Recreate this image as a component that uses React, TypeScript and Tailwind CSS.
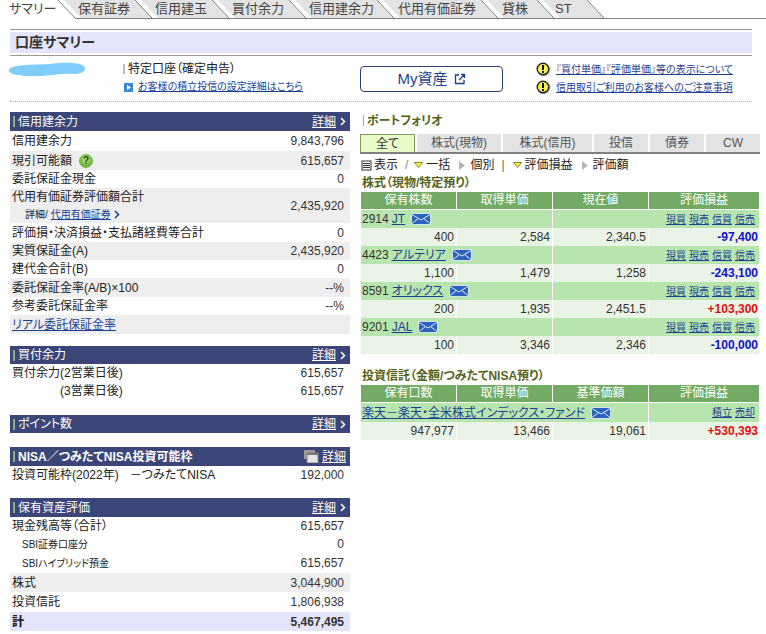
const font = "[font-family:'Liberation_Sans','Noto_Sans_CJK_JP',sans-serif] [font-feature-settings:'palt']"

const tabs = [
  { label: 'サマリー', w: 64, px: 9 },
  { label: '保有証券', w: 77, px: 14 },
  { label: '信用建玉', w: 77, px: 14 },
  { label: '買付余力', w: 77, px: 14 },
  { label: '信用建余力', w: 88, px: 14 },
  { label: '代用有価証券', w: 104, px: 15 },
  { label: '貸株', w: 56, px: 15 },
  { label: 'ST', w: 50, px: 12 },
]

function Tabs() {
  return (
    <div className="flex h-[19px] border-b border-[#808080]">
      {tabs.map((t, i) => (
        <div
          key={t.label}
          className="relative h-[19px] text-[13px] leading-[18px] text-[#444] shrink-0"
          style={{ width: t.w, zIndex: 20 - i }}
        >
          <svg className="absolute left-0 top-0" width={t.w + 18} height="19">
            {i === 0 ? (
              <path d={`M0 0H${t.w - 6}L${t.w + 11} 18V19H0Z`} fill="#ffffff" />
            ) : (
              <path d={`M0 0H${t.w - 6}L${t.w + 11} 18H17L0 0Z`} fill="#e3e3e3" />
            )}
            <path d={`M${t.w - 6} 0L${t.w + 11} 18`} stroke="#808080" fill="none" />
          </svg>
          <span className="relative whitespace-nowrap" style={{ marginLeft: t.px }}>{t.label}</span>
        </div>
      ))}
    </div>
  )
}

function Warn() {
  return (
    <svg width="15" height="15" viewBox="0 0 15 15" className="shrink-0">
      <circle cx="8" cy="8" r="6.5" fill="#bbbbbb" />
      <circle cx="7" cy="7" r="5.8" fill="#f7ee4a" stroke="#222" strokeWidth="1.4" />
      <rect x="6" y="3" width="2" height="5" fill="#111" />
      <rect x="6" y="9" width="2" height="2" fill="#111" />
    </svg>
  )
}

function Envelope() {
  return (
    <svg width="20" height="12" viewBox="0 0 20 12" className="shrink-0">
      <rect x="0" y="0" width="20" height="12" rx="1" fill="#d5e3ee" />
      <rect x="1" y="1" width="18" height="10" fill="#2a62bd" />
      <path d="M1 1.5L10 7L19 1.5M1 10.5L7.5 5.5M19 10.5L12.5 5.5" stroke="#e8f1fb" strokeWidth="1" fill="none" />
    </svg>
  )
}

function SectionHead({ title, h = 'h-[19px]', bold, copy }: { title: string; h?: string; bold?: boolean; copy?: boolean }) {
  return (
    <div className={`${h} bg-[#3c4578] flex items-center justify-between pl-[3px] pr-[4px] text-white text-[12px]`}>
      <div className={`flex items-center gap-[3px] ${bold ? 'font-bold' : ''}`}>
        <span className="w-[2px] h-[11px] bg-[#8fb070]" />
        <span className="whitespace-nowrap">{title}</span>
      </div>
      <div className="flex items-center gap-[3px]">
        {copy && (
          <svg width="15" height="13" viewBox="0 0 15 13">
            <rect x="0" y="0" width="11" height="9" fill="#9a9a9a" />
            <rect x="3" y="3" width="11" height="10" fill="#e6e6e6" stroke="#8a8a8a" />
            <rect x="3" y="3" width="11" height="2" fill="#777" />
          </svg>
        )}
        <a className="underline">詳細</a>
        {!copy && (
          <svg width="6" height="9" viewBox="0 0 6 9" className="ml-[1px]">
            <path d="M1 1L4.5 4.5L1 8" stroke="#fff" strokeWidth="1.5" fill="none" />
          </svg>
        )}
      </div>
    </div>
  )
}

function Row({
  label,
  value,
  gray,
  h = 'h-[18px]',
  bg,
  className = '',
}: {
  label: React.ReactNode
  value?: string
  gray?: boolean
  h?: string
  bg?: string
  className?: string
}) {
  return (
    <div
      className={`${h} ${bg ?? (gray ? 'bg-[#eeeeee]' : 'bg-white')} flex items-center justify-between pl-[2px] pr-[6px] text-[12px] text-[#222] ${className}`}
    >
      <div className="flex items-center whitespace-nowrap">{label}</div>
      {value && <span className="text-[#333]">{value}</span>}
    </div>
  )
}

function LeftColumn() {
  return (
    <div className="w-[340px] shrink-0 pt-[10px]">
      <SectionHead title="信用建余力" />
      <Row label="信用建余力" value="9,843,796" h="h-[20px]" />
      <Row
        gray
        h="h-[19px]"
        value="615,657"
        label={
          <>
            現引可能額
            <span className="ml-[7px] w-[14px] h-[14px] rounded-full border border-[#7fb84e] bg-[radial-gradient(circle_at_50%_40%,#b4e884,#4f9e1f)] text-[#1c4a10] text-[10px] leading-[12px] text-center font-bold">?</span>
          </>
        }
      />
      <Row label="委託保証金現金" value="0" />
      <div className="h-[35px] bg-[#eeeeee] flex items-center justify-between pl-[2px] pr-[6px] text-[12px] text-[#222]">
        <div className="flex flex-col">
          <span className="leading-[18px]">代用有価証券評価額合計</span>
          <span className="pl-[13px] text-[10px] leading-[17px] flex items-center">
            詳細/
            <a className="ml-[3px] text-[#1c3f94] underline">代用有価証券</a>
            <svg width="6" height="9" viewBox="0 0 6 9" className="ml-[3px]">
              <path d="M1 1L4.5 4.5L1 8" stroke="#1c3f94" strokeWidth="1.5" fill="none" />
            </svg>
          </span>
        </div>
        <span className="text-[#333]">2,435,920</span>
      </div>
      <Row label="評価損・決済損益・支払諸経費等合計" value="0" h="h-[19px]" />
      <Row gray label="実質保証金(A)" value="2,435,920" />
      <Row label="建代金合計(B)" value="0" />
      <Row gray label="委託保証金率(A/B)×100" value="--%" h="h-[19px]" />
      <Row label="参考委託保証金率" value="--%" />
      <Row gray h="h-[19px]" label={<a className="text-[#1c3f94] underline">リアル委託保証金率</a>} />

      <div className="mt-[12px]">
        <SectionHead title="買付余力" h="h-[18px]" />
        <Row label="買付余力(2営業日後)" value="615,657" />
        <Row label={<span className="pl-[48px]">(3営業日後)</span>} value="615,657" />
      </div>

      <div className="mt-[15px]">
        <SectionHead title="ポイント数" h="h-[18px]" />
      </div>

      <div className="mt-[14px]">
        <SectionHead title="NISA／つみたてNISA投資可能枠" bold copy />
        <Row label={<>投資可能枠(2022年)<span className="ml-[11px]">－つみたてNISA</span></>} value="192,000" />
      </div>

      <div className="mt-[14px]">
        <SectionHead title="保有資産評価" />
        <Row label="現金残高等（合計）" value="615,657" />
        <Row label={<span className="pl-[10px] text-[10px]">SBI証券口座分</span>} value="0" />
        <Row label={<span className="pl-[10px] text-[10px]">SBIハイブリッド預金</span>} value="615,657" h="h-[20px]" />
        <Row gray label="株式" value="3,044,900" h="h-[19px]" />
        <Row label="投資信託" value="1,806,938" h="h-[20px]" />
        <Row
          bg="bg-[#e4e4fa]"
          h="h-[19px]"
          label={<b>計</b>}
          value="5,467,495"
          className="font-bold"
        />
      </div>
    </div>
  )
}

const trade = ['現買', '現売', '信買', '信売']

function HoldingHead({ cols }: { cols: string[] }) {
  return (
    <div className="grid grid-cols-[95px_95px_95px_110px] gap-x-px h-[17px] bg-white text-white text-[12px] leading-[17px] text-center">
      {cols.map((c) => (
        <div key={c} className="bg-[#73ab64]">{c}</div>
      ))}
    </div>
  )
}

function Values({ vals, pl }: { vals: string[]; pl: string }) {
  const plColor = pl.startsWith('+') ? 'text-[#e01010]' : 'text-[#1010cc]'
  return (
    <div className="grid grid-cols-[95px_95px_95px_110px] gap-x-px h-[18px] text-[12px] text-[#333] text-right">
      {vals.map((v) => (
        <div key={v} className="bg-[#e9f3e6] pr-[2px] leading-[18px]">{v}</div>
      ))}
      <div className={`bg-[#e9f3e6] pr-[1px] leading-[18px] font-bold ${plColor}`}>{pl}</div>
    </div>
  )
}

function Stock({ code, name, vals, pl }: { code: string; name: string; vals: string[]; pl: string }) {
  return (
    <>
      <div className="flex gap-x-px h-[18px] text-[12px]">
        <div className="w-[191px] bg-[#b8e5ae] flex items-center pl-[1px] text-[#333]">
          {code}
          <a className="ml-[3px] text-[#1c3f94] underline">{name}</a>
          <span className="ml-[6px]"><Envelope /></span>
        </div>
        <div className="flex-1 bg-[#b8e5ae] flex items-center justify-end pr-[4px] gap-[3px] text-[10px]">
          {trade.map((t) => (
            <a key={t} className="text-[#1c3f94] underline">{t}</a>
          ))}
        </div>
      </div>
      <Values vals={vals} pl={pl} />
    </>
  )
}

function DownMark({ className }: { className: string }) {
  return (
    <svg width="9" height="6" viewBox="0 0 9 6" className={className}>
      <path d="M0.5 0.5H8.5L4.5 5.5Z" fill="#fff04a" stroke="#7d8c1e" />
    </svg>
  )
}

function RightMark({ className }: { className: string }) {
  return (
    <svg width="6" height="9" viewBox="0 0 6 9" className={className}>
      <path d="M0 0L6 4.5L0 9Z" fill="#b5b5b5" />
    </svg>
  )
}

function RightColumn() {
  return (
    <div className="w-[400px] shrink-0 pt-[11px]">
      <div className="h-[15px] flex items-center gap-[3px] pl-[3px] text-[12px] font-bold text-[#55631a]">
        <span className="w-[1px] h-[11px] bg-[#c9b040]" />
        ポートフォリオ
      </div>
      <div className="mt-[6px] flex gap-[2px] h-[20px] border-b-[2px] border-[#808080] text-[12px] text-[#555] text-center leading-[18px]">
        <div className="w-[55px] bg-[#e6fbc8] border border-b-0 border-[#7f9a5a] text-[#333] leading-[18px]">全て</div>
        <div className="w-[84px] bg-[#e3e3e3]">株式(現物)</div>
        <div className="w-[89px] bg-[#e3e3e3]">株式(信用)</div>
        <div className="w-[54px] bg-[#e3e3e3]">投信</div>
        <div className="w-[54px] bg-[#e3e3e3]">債券</div>
        <div className="w-[54px] bg-[#e3e3e3]">CW</div>
      </div>
      <div className="h-[20px] pt-[2px] flex items-center text-[12px] text-[#222] whitespace-nowrap">
        <svg width="11" height="11" viewBox="0 0 11 11" className="ml-[1px] mr-[2px]">
          <rect x="1" y="1" width="9" height="9" fill="#fff" stroke="#333" />
          <path d="M2 3.5H9M2 5.5H9M2 7.5H9" stroke="#333" />
        </svg>
        表示
        <span className="ml-[7px] text-[#888]">/</span>
        <DownMark className="ml-[6px] mr-[3px]" />
        一括
        <RightMark className="ml-[9px] mr-[5px]" />
        個別
        <span className="ml-[7px] text-[#666]">|</span>
        <DownMark className="ml-[8px] mr-[3px]" />
        評価損益
        <RightMark className="ml-[9px] mr-[5px]" />
        評価額
      </div>
      <div className="h-[18px] pl-[2px] text-[12px] font-bold text-[#55631a] leading-[18px]">株式（現物/特定預り）</div>
      <div className="w-[398px] ml-[1px]">
        <HoldingHead cols={['保有株数', '取得単価', '現在値', '評価損益']} />
        <div className="h-px" />
        <Stock code="2914" name="JT" vals={['400', '2,584', '2,340.5']} pl="-97,400" />
        <Stock code="4423" name="アルテリア" vals={['1,100', '1,479', '1,258']} pl="-243,100" />
        <Stock code="8591" name="オリックス" vals={['200', '1,935', '2,451.5']} pl="+103,300" />
        <Stock code="9201" name="JAL" vals={['100', '3,346', '2,346']} pl="-100,000" />
      </div>
      <div className="mt-[13px] h-[18px] pl-[2px] text-[12px] font-bold text-[#55631a] leading-[18px] whitespace-nowrap">投資信託（金額/つみたてNISA預り）</div>
      <div className="w-[398px] ml-[1px]">
        <HoldingHead cols={['保有口数', '取得単価', '基準価額', '評価損益']} />
        <div className="flex gap-x-px h-[19px] mt-px text-[12px]">
          <div className="w-[287px] bg-[#b8e5ae] flex items-center pl-[1px]">
            <a className="text-[#1c3f94] underline whitespace-nowrap">楽天－楽天・全米株式インデックス・ファンド</a>
            <span className="ml-[6px]"><Envelope /></span>
          </div>
          <div className="flex-1 bg-[#b8e5ae] flex items-center justify-end pr-[4px] gap-[3px] text-[10px]">
            <a className="text-[#1c3f94] underline">積立</a>
            <a className="text-[#1c3f94] underline">売却</a>
          </div>
        </div>
        <Values vals={['947,977', '13,466', '19,061']} pl="+530,393" />
      </div>
    </div>
  )
}

export default function App() {
  return (
    <div className={`w-[766px] h-[634px] bg-white overflow-hidden ${font}`}>
      <Tabs />
      <div className="ml-[10px] w-[742px] mt-[10px] border-y border-[#999] py-[2px] h-[27px]">
        <div className="h-[21px] bg-[#e4e4fa] pl-[5px] text-[14px] leading-[21px] font-bold text-[#333]">口座サマリー</div>
      </div>
      <div className="mx-[10px] w-[742px] h-[46px] border-b border-dotted border-[#aaa] flex relative">
        <svg width="80" height="18" viewBox="0 0 80 18" className="absolute left-[-3px] top-[5px]">
          <path d="M2 8C8 3 28 4 42 3C56 1 72 1 77 5C80 9 76 13 68 13C52 12 38 16 22 15C12 15 0 13 2 8Z" fill="#7fcdfb" />
        </svg>
        <div className="ml-[113px] pt-[5px] w-[237px] shrink-0 text-[#222]">
          <div className="flex items-center text-[12px] leading-[16px] gap-[3px]">
            <span className="w-[2px] h-[10px] bg-[#bbb]" />
            特定口座（確定申告）
          </div>
          <div className="flex items-center text-[10px] leading-[16px] mt-[2px]">
            <svg width="9" height="9" viewBox="0 0 9 9" className="ml-[1px] mr-[5px]">
              <rect width="9" height="9" fill="#3a8ad6" />
              <path d="M3 2L7 4.5L3 7Z" fill="#fff" />
            </svg>
            <a className="text-[#1c3f94] underline whitespace-nowrap">お客様の積立投信の設定詳細はこちら</a>
          </div>
        </div>
        <div className="mt-[10px] w-[143px] h-[26px] shrink-0 border border-[#2b3f7a] rounded-[4px] flex items-center justify-center gap-[6px] text-[15px] text-[#1c3f8c]">
          My資産
          <svg width="12" height="12" viewBox="0 0 12 12">
            <path d="M5 2H1.5V10.5H10V7M7 1.5H10.5V5M10.5 1.5L5 7" stroke="#1c3f8c" strokeWidth="1.3" fill="none" />
          </svg>
        </div>
        <div className="ml-[33px] pt-[6px] flex flex-col gap-[3px]">
          <div className="flex items-center gap-[5px] text-[10px] leading-[15px]">
            <Warn />
            <a className="text-[#1c3f94] underline whitespace-nowrap">『買付単価』『評価単価』等の表示について</a>
          </div>
          <div className="flex items-center gap-[5px] text-[10px] leading-[15px]">
            <Warn />
            <a className="text-[#1c3f94] underline whitespace-nowrap">信用取引ご利用のお客様へのご注意事項</a>
          </div>
        </div>
      </div>
      <div className="flex pl-[10px] gap-[10px]">
        <LeftColumn />
        <RightColumn />
      </div>
    </div>
  )
}
